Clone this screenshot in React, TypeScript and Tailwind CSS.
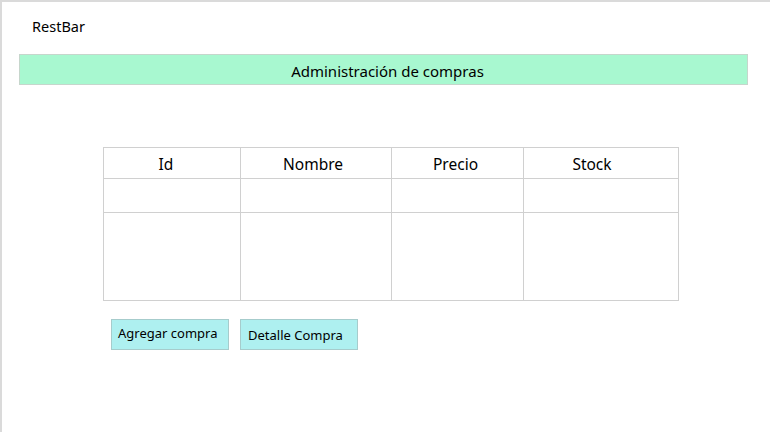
import React from "react";

export default function App() {
  const font = { fontFamily: '"Noto Sans", "Open Sans", sans-serif' };
  return (
    <div
      className="w-[770px] h-[432px] bg-white border-t-2 border-l-2 border-[#dadada] overflow-hidden text-black"
      style={font}
    >
      <div className="pl-[30px] pt-[14px] h-[52px] text-[14.5px] leading-[20px]">RestBar</div>
      <div className="ml-[17px] w-[729px] h-[31px] bg-[#a8f8d0] border border-[#c6d6cc] flex items-center justify-center pl-[8px] pt-[3px] text-[15px]">
        Administración de compras
      </div>
      <div className="ml-[101px] mt-[62px]">
        <table className="border-collapse text-[15.5px]">
          <thead>
            <tr className="h-[31px]">
              <th className="w-[137px] border border-[#d0d0d0] font-normal p-0 pr-[12px] pt-[3px]">Id</th>
              <th className="w-[151px] border border-[#d0d0d0] font-normal p-0 pr-[6px] pt-[3px]">Nombre</th>
              <th className="w-[132px] border border-[#d0d0d0] font-normal p-0 pr-[4px] pt-[3px]">Precio</th>
              <th className="w-[155px] border border-[#d0d0d0] font-normal p-0 pr-[18px] pt-[3px]">Stock</th>
            </tr>
          </thead>
          <tbody>
            <tr className="h-[34px]">
              <td className="border border-[#d0d0d0]"></td>
              <td className="border border-[#d0d0d0]"></td>
              <td className="border border-[#d0d0d0]"></td>
              <td className="border border-[#d0d0d0]"></td>
            </tr>
            <tr className="h-[88px]">
              <td className="border border-[#d0d0d0]"></td>
              <td className="border border-[#d0d0d0]"></td>
              <td className="border border-[#d0d0d0]"></td>
              <td className="border border-[#d0d0d0]"></td>
            </tr>
          </tbody>
        </table>
      </div>
      <div className="ml-[109px] mt-[18px] flex gap-[11px]">
        <div className="w-[118px] h-[31px] bg-[#aef0f0] border border-[#a6cccc] text-[13px] leading-[16px] pl-[6px] pt-[5px]">
          Agregar compra
        </div>
        <div className="w-[118px] h-[31px] bg-[#aef0f0] border border-[#a6cccc] text-[13px] leading-[16px] pl-[7px] pt-[7px]">
          Detalle Compra
        </div>
      </div>
    </div>
  );
}
